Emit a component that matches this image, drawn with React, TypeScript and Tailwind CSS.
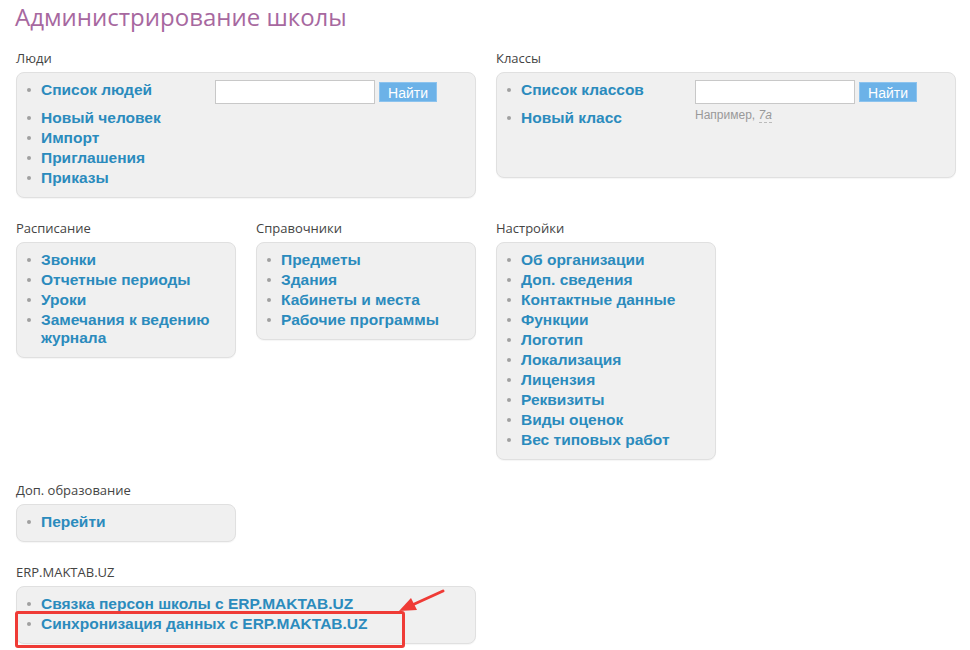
import type { ReactNode } from "react";

// ── Data ──────────────────────────────────────────────────────────────────────

const schedule = ["Звонки", "Отчетные периоды", "Уроки", "Замечания к ведению журнала"];
const dictionaries = ["Предметы", "Здания", "Кабинеты и места", "Рабочие программы"];
const settings = [
  "Об организации",
  "Доп. сведения",
  "Контактные данные",
  "Функции",
  "Логотип",
  "Локализация",
  "Лицензия",
  "Реквизиты",
  "Виды оценок",
  "Вес типовых работ",
];

// ── Pieces ────────────────────────────────────────────────────────────────────

function Bullet() {
  return (
    <span className="w-[24px] shrink-0 flex justify-center pt-[7px]">
      <span className="w-[4px] h-[4px] rounded-full bg-[#a0a0a0]" />
    </span>
  );
}

function Item({ children }: { children: ReactNode }) {
  return (
    <li className="flex items-start mb-[2px]">
      <Bullet />
      <a href="#" className="text-[#2b8bbd] font-bold text-[15.5px] leading-[18px]">
        {children}
      </a>
    </li>
  );
}

function Section({
  title,
  span,
  children,
  boxClass = "",
}: {
  title: string;
  span: string;
  children: ReactNode;
  boxClass?: string;
}) {
  return (
    <section className={span}>
      <h3 className="text-[13px] leading-[18px] text-[#444] mb-[5px] font-['Open_Sans',sans-serif]">
        {title}
      </h3>
      <div
        className={`bg-[#f0f0f0] border border-[#e0e0e0] rounded-[8px] py-[8px] pr-2 shadow-[0_1px_1px_rgba(0,0,0,0.04)] ${boxClass}`}
      >
        <ul>{children}</ul>
      </div>
    </section>
  );
}

function SearchForm({ hint }: { hint?: boolean }) {
  return (
    <div className="absolute left-[198px] top-[-1px]">
      <div className="flex items-center gap-[4px]">
        <input className="w-[160px] h-[24px] bg-white border border-[#c8c8c8] outline-none" />
        <button
          type="button"
          className="h-[20px] w-[58px] bg-[#6cb2e8] text-white text-[14px] leading-[20px] border border-[#8cc3ee]"
        >
          Найти
        </button>
      </div>
      {hint && (
        <div className="mt-[3px] text-[12px] leading-[16px] text-[#999]">
          Например,{" "}
          <span className="italic border-b border-dashed border-[#bbb]">7а</span>
        </div>
      )}
    </div>
  );
}

function FirstItem({ label, hint }: { label: string; hint?: boolean }) {
  return (
    <li className="relative h-[26px] mb-[2px] flex items-start">
      <Bullet />
      <a href="#" className="text-[#2b8bbd] font-bold text-[15.5px] leading-[18px]">
        {label}
      </a>
      <SearchForm hint={hint} />
    </li>
  );
}

// ── Annotation (red box + arrow drawn over the page) ─────────────────────────

function Annotation() {
  return (
    <>
      <div className="absolute left-[15px] top-[611px] w-[390px] h-[37px] border-[3px] border-[#ef3b36] rounded-[3px] pointer-events-none" />
      <svg
        className="absolute left-[390px] top-[585px] pointer-events-none"
        width="60"
        height="35"
        viewBox="0 0 60 35"
      >
        <line x1="53" y1="6" x2="20" y2="21" stroke="#ef3b36" strokeWidth="3" strokeLinecap="round" />
        <polygon points="9,26 21,13 27,25" fill="#ef3b36" />
      </svg>
    </>
  );
}

// ── Page ──────────────────────────────────────────────────────────────────────

export default function App() {
  return (
    <div className="relative min-h-[650px] bg-white pl-[16px] pt-[1px] font-['Liberation_Sans',Arial,sans-serif]">
      <h1 className="text-[24px] leading-[32px] text-[#a7689f] font-['Open_Sans',sans-serif] -ml-[1px] mb-[16px]">
        Администрирование школы
      </h1>

      <div className="grid grid-cols-[220px_220px_220px_220px] gap-x-[20px] gap-y-[21px] items-start">
        <Section title="Люди" span="col-span-2">
          <FirstItem label="Список людей" />
          <Item>Новый человек</Item>
          <Item>Импорт</Item>
          <Item>Приглашения</Item>
          <Item>Приказы</Item>
        </Section>

        <Section title="Классы" span="col-span-2" boxClass="min-h-[106px]">
          <FirstItem label="Список классов" hint />
          <Item>Новый класс</Item>
        </Section>

        <Section title="Расписание" span="col-span-1">
          {schedule.map((s) => (
            <Item key={s}>{s}</Item>
          ))}
        </Section>

        <Section title="Справочники" span="col-span-1">
          {dictionaries.map((s) => (
            <Item key={s}>{s}</Item>
          ))}
        </Section>

        <Section title="Настройки" span="col-span-1">
          {settings.map((s) => (
            <Item key={s}>{s}</Item>
          ))}
        </Section>

        <div className="col-span-1" />

        <Section title="Доп. образование" span="col-span-1">
          <Item>Перейти</Item>
        </Section>

        <div className="col-span-3" />

        <Section title="ERP.MAKTAB.UZ" span="col-span-2">
          <Item>Связка персон школы с ERP.MAKTAB.UZ</Item>
          <Item>Синхронизация данных с ERP.MAKTAB.UZ</Item>
        </Section>
      </div>

      <Annotation />
    </div>
  );
}
